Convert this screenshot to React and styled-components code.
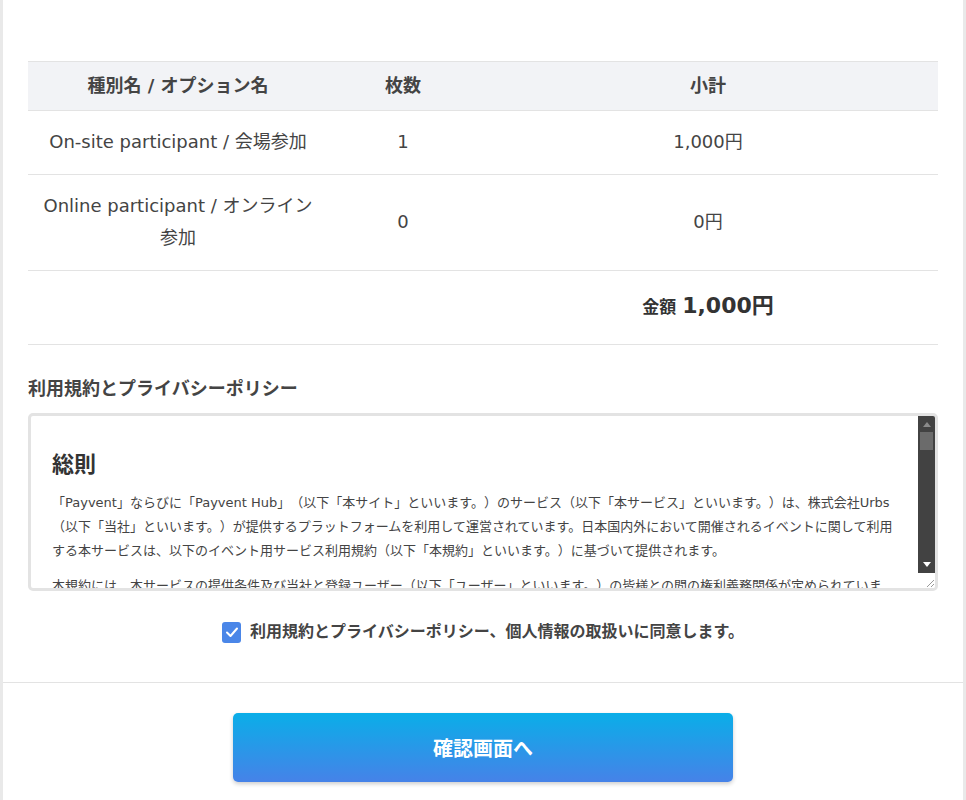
import React from "react";
import styled, { createGlobalStyle } from "styled-components";

const Global = createGlobalStyle`
  html, body { margin: 0; padding: 0; background: #e9e9e9; }
  body {
    font-family: "DejaVu Sans", "Noto Sans CJK JP", sans-serif;
    color: #444;
    text-spacing-trim: space-all;
    text-autospace: no-autospace;
  }
  * { box-sizing: border-box; }
`;

const Card = styled.div`
  width: 960px;
  margin: 0 auto;
  background: #fff;
  min-height: 800px;
`;

const Body = styled.div`
  padding: 61px 25px 39px;
`;

const Table = styled.table`
  width: 910px;
  border-collapse: collapse;
  table-layout: fixed;
`;

const Th = styled.th`
  background: #f2f3f6;
  border-top: 1px solid #e3e3e3;
  border-bottom: 1px solid #e3e3e3;
  padding: 12px 12px;
  font-size: 18px;
  line-height: 24px;
  font-weight: 700;
  color: #444;
  text-align: center;
`;

const Td = styled.td`
  border-bottom: 1px solid #e3e3e3;
  padding: 15px 12px 16px;
  font-size: 18px;
  line-height: 32px;
  color: #444;
  text-align: center;
  vertical-align: middle;
`;

const TotalCell = styled.td`
  border-bottom: 1px solid #e3e3e3;
  padding: 17px 12px 18px;
  line-height: 36px;
  text-align: center;
  color: #333;
  font-weight: 700;
`;

const TotalLabel = styled.span`
  font-size: 17px;
  margin-right: 6px;
`;

const TotalValue = styled.span`
  font-size: 22px;
`;

const SectionTitle = styled.h3`
  margin: 32px 0 12px;
  font-size: 18px;
  line-height: 24px;
  font-weight: 700;
  color: #444;
`;

const TermsBox = styled.div`
  display: flex;
  height: 178px;
  border: 3px solid #e3e3e3;
  border-radius: 5px;
  background: #fff;
  overflow: hidden;
`;

const TermsContent = styled.div`
  flex: 1;
  overflow: hidden;
  padding: 34px 4px 0 21px;
`;

const TermsHeading = styled.h2`
  margin: 0 0 11px;
  font-size: 22px;
  line-height: 30px;
  font-weight: 700;
  color: #333;
`;

const TermsPara = styled.p`
  margin: 0 0 11px;
  font-size: 13px;
  line-height: 24px;
  color: #444;
  white-space: nowrap;
`;

const ScrollCol = styled.div`
  width: 17px;
  display: flex;
  flex-direction: column;
`;

const Track = styled.div`
  flex: 1;
  background: #424242;
  display: flex;
  flex-direction: column;
  align-items: center;
  padding-top: 6px;
  padding-bottom: 6px;
`;

const Arrow = styled.div`
  width: 0;
  height: 0;
  border-left: 4px solid transparent;
  border-right: 4px solid transparent;
  ${(p) =>
    p.$down
      ? "border-top: 5px solid #fff; margin-top: auto;"
      : "border-bottom: 5px solid #8a8a8a;"}
`;

const Thumb = styled.div`
  width: 13px;
  height: 18px;
  margin-top: 5px;
  background: #6b6b6b;
`;

const Corner = styled.div`
  height: 15px;
  background: #fff;
  display: flex;
  align-items: flex-end;
  justify-content: flex-end;
`;

const AgreeRow = styled.label`
  display: flex;
  align-items: center;
  justify-content: center;
  gap: 9px;
  margin-top: 30px;
  font-size: 16px;
  font-weight: 700;
  line-height: 22px;
  color: #444;
`;

const CheckBox = styled.span`
  width: 19px;
  height: 21px;
  border-radius: 3px;
  background: #4a86e8;
  display: flex;
  align-items: center;
  justify-content: center;
`;

const Footer = styled.div`
  border-top: 1px solid #e3e3e3;
  padding: 30px 0 40px;
  display: flex;
  justify-content: center;
`;

const SubmitButton = styled.button`
  width: 500px;
  height: 69px;
  border: none;
  border-radius: 5px;
  background: linear-gradient(180deg, #0aaee8 0%, #4682e8 100%);
  box-shadow: 0 2px 4px rgba(0, 0, 0, 0.2);
  color: #fff;
  font-family: "DejaVu Sans", "Noto Sans CJK JP", sans-serif;
  font-size: 20px;
  font-weight: 700;
  cursor: pointer;
`;

const rows = [
  { name: "On-site participant / 会場参加", qty: 1, sub: "1,000円" },
  { name: "Online participant / オンライン参加", qty: 0, sub: "0円" },
];

export default function App() {
  return (
    <>
      <Global />
      <Card>
        <Body>
          <Table>
            <colgroup>
              <col style={{ width: 300 }} />
              <col style={{ width: 150 }} />
              <col style={{ width: 460 }} />
            </colgroup>
            <thead>
              <tr>
                <Th>種別名 / オプション名</Th>
                <Th>枚数</Th>
                <Th>小計</Th>
              </tr>
            </thead>
            <tbody>
              {rows.map((r) => (
                <tr key={r.name}>
                  <Td>{r.name}</Td>
                  <Td>{r.qty}</Td>
                  <Td>{r.sub}</Td>
                </tr>
              ))}
              <tr>
                <TotalCell />
                <TotalCell />
                <TotalCell>
                  <TotalLabel>金額</TotalLabel>
                  <TotalValue>1,000円</TotalValue>
                </TotalCell>
              </tr>
            </tbody>
          </Table>

          <SectionTitle>利用規約とプライバシーポリシー</SectionTitle>
          <TermsBox>
            <TermsContent>
              <TermsHeading>総則</TermsHeading>
              <TermsPara>
                「Payvent」ならびに「Payvent Hub」（以下「本サイト」といいます。）のサービス（以下「本サービス」といいます。）は、株式会社Urbs
                <br />
                （以下「当社」といいます。）が提供するプラットフォームを利用して運営されています。日本国内外において開催されるイベントに関して利用
                <br />
                する本サービスは、以下のイベント用サービス利用規約（以下「本規約」といいます。）に基づいて提供されます。
              </TermsPara>
              <TermsPara>
                本規約には、本サービスの提供条件及び当社と登録ユーザー（以下「ユーザー」といいます。）の皆様との間の権利義務関係が定められていま
                <br />
                す。本サービスの利用に際しては、本規約の全文をお読みいただいたうえで、本規約に同意いただく必要があります。
              </TermsPara>
            </TermsContent>
            <ScrollCol>
              <Track>
                <Arrow />
                <Thumb />
                <Arrow $down />
              </Track>
              <Corner>
                <svg width="10" height="10" viewBox="0 0 10 10">
                  <path d="M9 2 L2 9 M9 6 L6 9" stroke="#999" strokeWidth="1" />
                </svg>
              </Corner>
            </ScrollCol>
          </TermsBox>

          <AgreeRow>
            <CheckBox>
              <svg width="14" height="12" viewBox="0 0 14 12">
                <path
                  d="M2 6.5 L5.5 10 L12 2.5"
                  fill="none"
                  stroke="#fff"
                  strokeWidth="2"
                  strokeLinecap="round"
                  strokeLinejoin="round"
                />
              </svg>
            </CheckBox>
            利用規約とプライバシーポリシー、個人情報の取扱いに同意します。
          </AgreeRow>
        </Body>
        <Footer>
          <SubmitButton>確認画面へ</SubmitButton>
        </Footer>
      </Card>
    </>
  );
}
